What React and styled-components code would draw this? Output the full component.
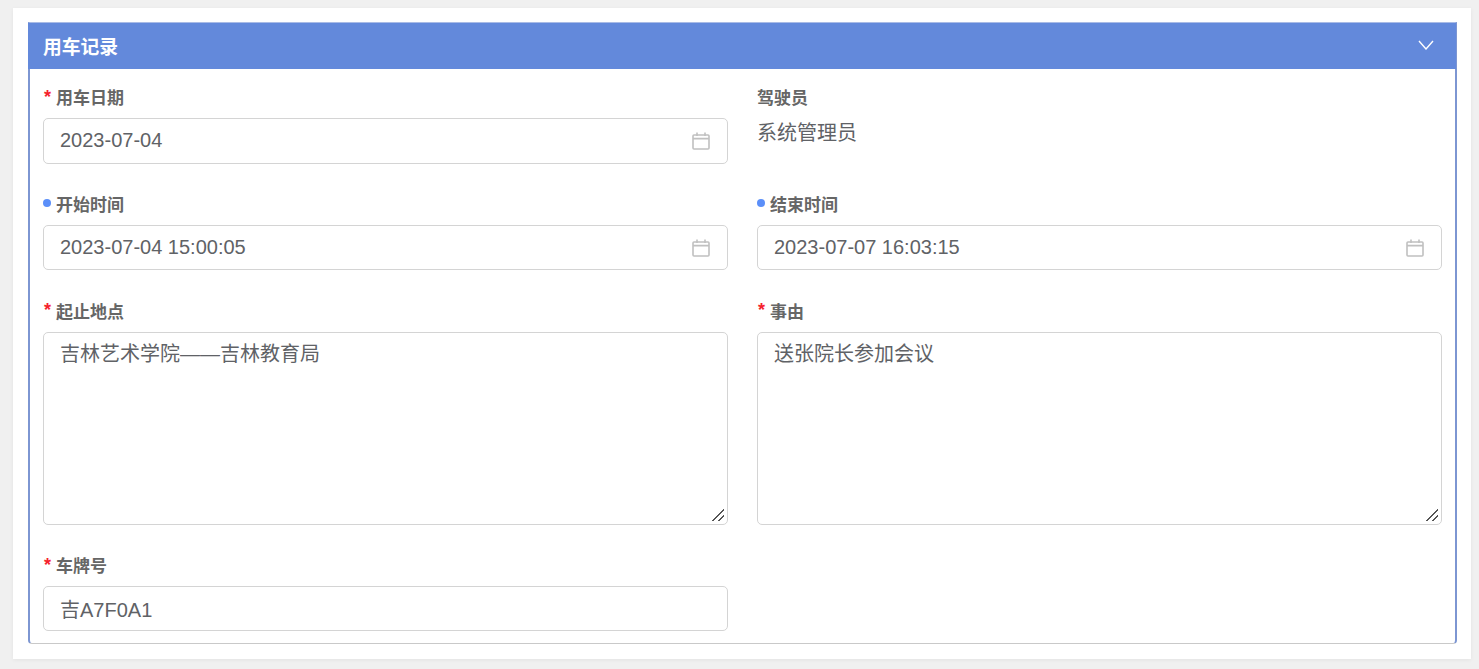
import React from 'react'
import styled, { createGlobalStyle } from 'styled-components'

const GlobalStyle = createGlobalStyle`
  html, body { margin: 0; padding: 0; background: #f0f0f0; }
  body { font-family: "Liberation Sans", "Noto Sans CJK SC", sans-serif; overflow: hidden; }
`

const Page = styled.div`
  height: 669px;
  box-sizing: border-box;
  padding: 8px 8px 10px 13px;
`

const Card = styled.div`
  height: 100%;
  box-sizing: border-box;
  padding: 14px 14px 15px 15px;
  background: #fff;
  box-shadow: 0 1px 4px rgba(0, 0, 0, 0.06);
`

const Panel = styled.section`
  height: 100%;
  box-sizing: border-box;
  border: 2px solid #7d96d2;
  border-top: 1px solid #a9bbe6;
  border-bottom: 1px solid #c9c9c9;
  border-radius: 0 0 4px 4px;
  background: #fff;
`

const Header = styled.header`
  height: 46px;
  margin: 0 -1px 0 -2px;
  padding: 0 22px 2px 15px;
  box-sizing: border-box;
  display: flex;
  align-items: center;
  justify-content: space-between;
  background: #6389db;
  color: #fff;
`

const Title = styled.h2`
  margin: 0;
  font-size: 18.8px;
  font-weight: 700;
`

const Form = styled.form`
  display: grid;
  grid-template-columns: 685px 685px;
  column-gap: 29px;
  row-gap: 31.5px;
  padding: 19.3px 13px 0;
`

const Field = styled.div`
  display: flex;
  flex-direction: column;
  min-width: 0;
`

const Label = styled.label`
  height: 30px;
  padding-bottom: 13px;
  box-sizing: border-box;
  display: flex;
  align-items: center;
  font-size: 17px;
  font-weight: 700;
  color: #666;
`

const Star = styled.span`
  width: 13px;
  flex: none;
  padding-left: 1px;
  box-sizing: border-box;
  color: #f5222d;
  font-size: 18px;
  line-height: 20px;
`

const Dot = styled.span`
  width: 8px;
  height: 8px;
  margin: -2px 5px 0 0;
  flex: none;
  border-radius: 50%;
  background: #5b8ff9;
`

const InputWrap = styled.div`
  position: relative;
  height: 45.3px;
`

const Input = styled.input`
  width: 100%;
  height: 100%;
  box-sizing: border-box;
  padding: 0 40px 0 16px;
  border: 1px solid #d4d4d4;
  border-radius: 5px;
  outline: none;
  background: #fff;
  color: #606266;
  font: 20px "Liberation Sans", "Noto Sans CJK SC", sans-serif;
`

const CalendarIcon = styled.svg`
  position: absolute;
  top: 13px;
  right: 17px;
  width: 20px;
  height: 20px;
`

const TextArea = styled.textarea`
  display: block;
  width: 100%;
  height: 192.7px;
  box-sizing: border-box;
  padding: 8px 16px;
  border: 1px solid #d4d4d4;
  border-radius: 5px;
  outline: none;
  resize: vertical;
  background: #fff;
  color: #606266;
  font: 20px/26px "Liberation Sans", "Noto Sans CJK SC", sans-serif;

  &::-webkit-resizer {
    background: linear-gradient(
        135deg,
        transparent 8.2px,
        #555 8.2px,
        #555 9.8px,
        transparent 9.8px,
        transparent 12.4px,
        #555 12.4px,
        #555 14px,
        transparent 14px
      )
      0 0 / 12px 12px no-repeat;
  }
`

const PlainValue = styled.div`
  margin-top: -1px;
  color: #606266;
  font-size: 20px;
  line-height: 32px;
`

const Calendar = () => (
  <CalendarIcon viewBox="0 0 20 20" fill="none" stroke="#c0c0c0" strokeWidth="1.6">
    <rect x="2" y="4" width="16" height="14" rx="1" />
    <path d="M2 7.6h16M6 1.5v3.5M14 1.5v3.5" />
  </CalendarIcon>
)

const Chevron = () => (
  <svg width="16" height="10" viewBox="0 0 16 10" fill="none" stroke="#fff" strokeWidth="1.4">
    <path d="M1 1l7 8 7-8" />
  </svg>
)

const DateField = ({ label, value, mark }) => (
  <Field>
    <Label>{mark === 'dot' ? <Dot /> : <Star>*</Star>}{label}</Label>
    <InputWrap>
      <Input readOnly value={value} />
      <Calendar />
    </InputWrap>
  </Field>
)

const AreaField = ({ label, value }) => (
  <Field>
    <Label><Star>*</Star>{label}</Label>
    <TextArea readOnly value={value} />
  </Field>
)

export default function App() {
  return (
    <Page>
      <GlobalStyle />
      <Card>
        <Panel>
          <Header>
            <Title>用车记录</Title>
            <Chevron />
          </Header>
          <Form>
            <DateField label="用车日期" value="2023-07-04" />
            <Field>
              <Label>驾驶员</Label>
              <PlainValue>系统管理员</PlainValue>
            </Field>
            <DateField label="开始时间" value="2023-07-04 15:00:05" mark="dot" />
            <DateField label="结束时间" value="2023-07-07 16:03:15" mark="dot" />
            <AreaField label="起止地点" value="吉林艺术学院——吉林教育局" />
            <AreaField label="事由" value="送张院长参加会议" />
            <Field>
              <Label><Star>*</Star>车牌号</Label>
              <InputWrap>
                <Input readOnly value="吉A7F0A1" />
              </InputWrap>
            </Field>
          </Form>
        </Panel>
      </Card>
    </Page>
  )
}
